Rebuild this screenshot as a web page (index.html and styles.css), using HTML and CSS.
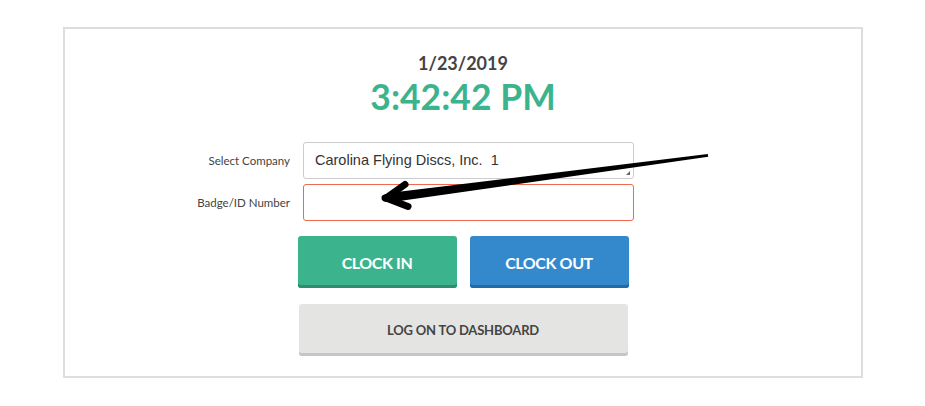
FILE: index.html
```html
<!DOCTYPE html>
<html>
<head>
<meta charset="utf-8">
<link rel="stylesheet" href="styles.css">
</head>
<body>
<div class="card">
  <div class="date">1/23/2019</div>
  <div class="time">3:42:42 PM</div>
  <div class="form">
    <label class="label">Select Company</label>
    <div class="select">Carolina Flying Discs, Inc.&nbsp; 1<span class="grip"></span></div>
    <label class="label">Badge/ID Number</label>
    <div class="input"></div>
  </div>
  <div class="btns">
    <button class="btn in">CLOCK IN</button>
    <button class="btn out">CLOCK OUT</button>
  </div>
  <button class="dash">LOG ON TO DASHBOARD</button>
</div>
<svg class="arrow" width="925" height="406" viewBox="0 0 925 406">
  <path d="M707.8 154.0 L708.2 156.8 L396 201.5 L394.8 192.3 Z" fill="#000"/>
  <path d="M386 198 L405 184.5" stroke="#000" stroke-width="7" stroke-linecap="round" fill="none"/>
  <path d="M386 198 L408 206.5" stroke="#000" stroke-width="7" stroke-linecap="round" fill="none"/>
  <path d="M385 198 L399 196.5" stroke="#000" stroke-width="7" stroke-linecap="round" fill="none"/>
</svg>
</body>
</html>
```
FILE: styles.css
```css
html, body { margin: 0; padding: 0; background: #fff; }
body { font-family: Lato, "Liberation Sans", sans-serif; color: #444; width: 925px; height: 406px; position: relative; overflow: hidden; }
.card {
  box-sizing: border-box;
  width: 800px;
  height: 351px;
  margin: 27px 0 0 63px;
  border: 2px solid #ddd;
  display: flex;
  flex-direction: column;
  align-items: center;
  padding-top: 22px;
}
.date { font-size: 18px; font-weight: 700; color: #444; line-height: 24px; }
.time { font-size: 35.5px; font-weight: 700; color: #3bb48e; line-height: 44px; margin-top: 0; }
.form {
  align-self: flex-start;
  display: grid;
  grid-template-columns: 100px 331px;
  column-gap: 13px;
  row-gap: 5px;
  align-items: center;
  margin-top: 23px;
  margin-left: 125px;
}
.label { font-size: 11.5px; color: #444; text-align: right; }
.select, .input {
  box-sizing: border-box;
  height: 37px;
  border-radius: 3px;
  position: relative;
}
.select {
  border: 1px solid #ccc;
  font-family: "Liberation Sans", Arial, sans-serif;
  font-size: 14.5px;
  color: #333;
  padding-left: 11px;
  line-height: 35px;
}
.grip {
  position: absolute; right: 3px; bottom: 3px;
  width: 0; height: 0;
  border-left: 4px solid transparent;
  border-bottom: 4px solid #666;
}
.input { border: 1px solid #eb6a50; }
.btns { display: flex; gap: 13px; margin-top: 15px; }
.btn {
  width: 159px; height: 52px;
  border: none; border-radius: 3px;
  font-family: Lato, sans-serif; font-weight: 700; font-size: 16px;
  letter-spacing: -0.4px;
  color: #fff;
  padding: 0;
}
.in { background: #3bb48e; box-shadow: inset 0 -3px 0 #2d8d6e; }
.out { background: #3489cd; box-shadow: inset 0 -3px 0 #246aa5; }
.dash {
  margin-top: 16px;
  width: 329px; height: 52px;
  border: none; border-radius: 3px;
  background: #e4e5e3;
  box-shadow: inset 0 -3px 0 #c6c7c5;
  font-family: Lato, sans-serif; font-weight: 700; font-size: 13px;
  color: #444;
  letter-spacing: -0.2px;
  padding: 0;
}
.arrow { position: absolute; left: 0; top: 0; pointer-events: none; }
```
